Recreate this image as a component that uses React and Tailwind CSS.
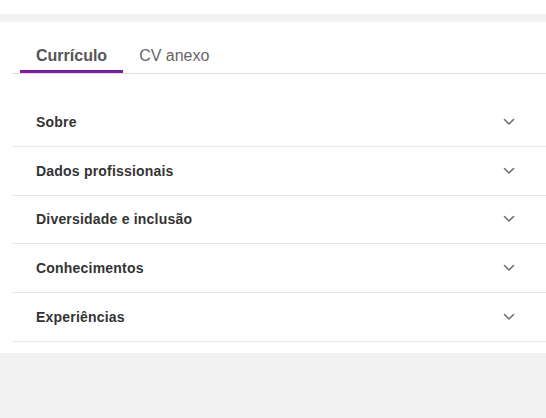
import React from "react";

const rows = [
  "Sobre",
  "Dados profissionais",
  "Diversidade e inclusão",
  "Conhecimentos",
  "Experiências",
];

function Chevron() {
  return (
    <svg width="12" height="8" viewBox="0 0 12 8" fill="none" className="block">
      <path d="M1.5 1.5 L6 6 L10.5 1.5" stroke="#707070" strokeWidth="1.6" strokeLinecap="round" strokeLinejoin="round" />
    </svg>
  );
}

export default function App() {
  return (
    <div className="w-[546px] h-[418px] bg-[#f2f2f2] font-['Liberation_Sans',Arial,sans-serif] overflow-hidden">
      <div className="h-[14px] bg-white" />
      <div className="h-[8px] bg-[#f1f1f1]" />
      <div className="bg-white pl-3 pb-[11px]">
        <div className="flex border-b border-[#dedede] pt-[22px] pl-2">
          <div className="px-4 pb-[2px] border-b-[3px] border-[#7b1fa2] text-base leading-6 font-bold text-[#555555]">
            Currículo
          </div>
          <div className="px-4 pb-[2px] border-b-[3px] border-transparent text-base leading-6 text-[#666666]">
            CV anexo
          </div>
        </div>
        <div className="pt-6">
          {rows.map((r) => (
            <div
              key={r}
              className="h-[48.75px] flex items-center justify-between border-b border-[#e8e8e8] pl-6 pr-[31px]"
            >
              <span className="text-sm font-bold tracking-[0.2px] text-[#333333]">{r}</span>
              <Chevron />
            </div>
          ))}
        </div>
      </div>
    </div>
  );
}
